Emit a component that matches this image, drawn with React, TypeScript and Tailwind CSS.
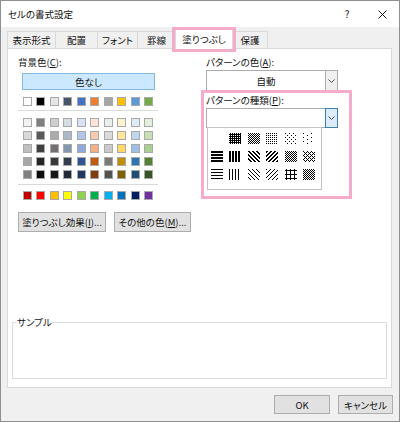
import * as React from "react";

const THEME_TOP = ["#FFFFFF", "#000000", "#E7E6E6", "#44546A", "#4472C4", "#ED7D31", "#A5A5A5", "#FFC000", "#5B9BD5", "#70AD47"];
const THEME_ROWS = [
  ["#F2F2F2", "#7F7F7F", "#D0CECE", "#D6DCE4", "#D9E1F2", "#FCE4D6", "#EDEDED", "#FFF2CC", "#DDEBF7", "#E2EFDA"],
  ["#D9D9D9", "#595959", "#AEAAAA", "#ACB9CA", "#B4C6E7", "#F8CBAD", "#DBDBDB", "#FFE699", "#BDD7EE", "#C6E0B4"],
  ["#BFBFBF", "#404040", "#757171", "#8497B0", "#8EA9DB", "#F4B084", "#C9C9C9", "#FFD966", "#9BC2E6", "#A9D08E"],
  ["#A6A6A6", "#262626", "#3A3838", "#333F4F", "#305496", "#C65911", "#7B7B7B", "#BF8F00", "#2F75B5", "#548235"],
  ["#808080", "#0D0D0D", "#161616", "#222B35", "#203764", "#833C0C", "#525252", "#806000", "#1F4E78", "#375623"],
];
const STANDARD = ["#C00000", "#FF0000", "#FFC000", "#FFFF00", "#92D050", "#00B050", "#00B0F0", "#0070C0", "#002060", "#7030A0"];

type Fn = ((x: number, y: number) => boolean) | null;
const m = (a: number, n: number) => ((a % n) + n) % n;

// Excel fill patterns, 3 rows x 6
const PATTERNS: Fn[] = [
  null,
  (x, y) => !(x % 2 === 0 && y % 2 === 0),
  (x, y) => (x + y) % 2 === 0,
  (x, y) => x % 2 === 0 && y % 2 === 0,
  (x, y) => (x % 4 === 0 && y % 4 === 0) || (x % 4 === 2 && y % 4 === 2),
  (x, y) => (x % 8 === 0 && y % 4 === 0) || (x % 8 === 4 && y % 4 === 2),
  (_x, y) => y % 3 < 2,
  (x) => x % 3 < 2,
  (x, y) => m(x - y, 4) < 2,
  (x, y) => m(x + y, 4) < 2,
  (x, y) => (x + y) % 2 === 0 || (x % 2 === 0 && y % 2 === 0) && m(x + y, 4) === 0,
  (x, y) => !((x % 4 === 0 && y % 4 === 2) || (x % 4 === 2 && y % 4 === 0)) && (x + y) % 2 === 0 || (x % 2 === 1 && y % 2 === 1),
  (_x, y) => y % 3 === 0,
  (x) => x % 3 === 0,
  (x, y) => m(x - y, 4) === 0,
  (x, y) => m(x + y, 4) === 0,
  (x, y) => x % 4 === 1 || y % 4 === 1,
  (x, y) => m(x + y, 4) === 0 || m(x - y, 4) === 0 || (x + y) % 2 === 0 && x % 2 === 0,
];

function Pattern({ f }: { f: Fn }) {
  const rects: React.ReactNode[] = [];
  if (f) {
    for (let y = 0; y < 11; y++)
      for (let x = 0; x < 12; x++)
        if (f(x, y)) rects.push(<rect key={`${x}-${y}`} x={x} y={y} width={1} height={1} fill="#000" />);
  }
  return (
    <svg width="12" height="11" viewBox="0 0 12 11" shapeRendering="crispEdges" className="block">
      {rects}
    </svg>
  );
}

function SwatchRow({ colors }: { colors: string[] }) {
  return (
    <div className="flex gap-[4.5px] ml-[4.5px]">
      {colors.map((c, i) => (
        <div key={i} className="w-[9px] h-[9px] border border-[#a9a9a9]" style={{ backgroundColor: c }} />
      ))}
    </div>
  );
}

function Chevron() {
  return (
    <svg width="7" height="4" viewBox="0 0 7 4" className="block">
      <path d="M0.5 0.5 L3.5 3.5 L6.5 0.5" fill="none" stroke="#505050" strokeWidth="1" />
    </svg>
  );
}

function Tab({ label, w }: { label: string; w: string }) {
  return (
    <div className={`${w} h-[17px] mb-px -ml-px first:ml-0 border border-b-0 border-[#d9d9d9] bg-[#f0f0f0] flex items-center justify-center`}>
      {label}
    </div>
  );
}

export default function App() {
  return (
    <div className="w-[400px] h-[422px] bg-[#f0f0f0] border border-[#8f8f8f] flex flex-col text-[9.5px] leading-[12px] text-[#111] font-['Noto_Sans_CJK_JP',sans-serif] [font-feature-settings:'palt'] overflow-hidden">
      {/* title bar */}
      <div className="h-[26px] shrink-0 bg-white flex items-center pl-[7px]">
        <span>セルの書式設定</span>
        <span className="ml-auto w-[12px] text-center text-[10px]">?</span>
        <div className="ml-[12px] w-[34px] flex justify-center">
          <svg width="9" height="9" viewBox="0 0 9 9" className="block">
            <path d="M0.5 0.5 L8.5 8.5 M8.5 0.5 L0.5 8.5" stroke="#000" strokeWidth="0.9" />
          </svg>
        </div>
      </div>

      {/* tabs */}
      <div className="h-[22px] shrink-0 flex items-end pl-[6px] relative z-10">
        <Tab label="表示形式" w="w-[49px]" />
        <Tab label="配置" w="w-[43px]" />
        <Tab label="フォント" w="w-[41px]" />
        <Tab label="罫線" w="w-[39px]" />
        <div className="relative w-[58px] h-[22px] -ml-px bg-white border border-b-0 border-[#d9d9d9] flex items-center justify-center">
          塗りつぶし
          <div className="absolute left-[-4px] right-[-4px] top-[-1px] bottom-[-3px] border-[3px] border-[#f5abcb] pointer-events-none" />
        </div>
        <Tab label="保護" w="w-[36px]" />
      </div>

      {/* panel */}
      <div className="-mt-px ml-[6px] w-[385px] h-[340px] shrink-0 bg-white border border-[#d9d9d9] flex flex-col">
        <div className="flex pt-[7px]">
          {/* left column */}
          <div className="w-[193px] pl-[10px] flex flex-col">
            <div className="h-[12px]">背景色(<span className="underline">C</span>):</div>
            <div className="mt-[5px] ml-[4px] w-[133px] h-[17px] bg-[#cce8ff] border border-[#84b9e6] flex items-center justify-center">
              色なし
            </div>
            <div className="mt-[7px]">
              <SwatchRow colors={THEME_TOP} />
            </div>
            <div className="mt-[4px] w-[140px] h-px bg-[#dadada]" />
            <div className="mt-[7px] flex flex-col gap-[4px]">
              {THEME_ROWS.map((r, i) => (
                <SwatchRow key={i} colors={r} />
              ))}
            </div>
            <div className="mt-[5px] w-[140px] h-px bg-[#dadada]" />
            <div className="mt-[6px]">
              <SwatchRow colors={STANDARD} />
            </div>
            <div className="mt-[12px] flex gap-[8px]">
              <button className="w-[88px] h-[20px] bg-[#e1e1e1] border border-[#adadad] flex items-center justify-center">
                塗りつぶし効果(<span className="underline">I</span>)...
              </button>
              <button className="w-[77px] h-[20px] bg-[#e1e1e1] border border-[#adadad] flex items-center justify-center">
                その他の色(<span className="underline">M</span>)...
              </button>
            </div>
          </div>

          {/* right column */}
          <div className="flex flex-col">
            <div className="h-[12px] ml-[5px]">パターンの色(<span className="underline">A</span>):</div>
            <div className="mt-[2px] ml-[5px] w-[132px] h-[21px] flex">
              <div className="flex-1 border border-r-0 border-[#acacac] bg-white flex items-center justify-center">自動</div>
              <div className="w-[13px] border border-[#acacac] bg-[#efefef] flex items-center justify-center">
                <Chevron />
              </div>
            </div>
            <div className="-mt-px w-[151px] h-[109px] border-[3px] border-[#f5abcb] flex flex-col">
              <div className="mt-px h-[12px] ml-[2px]">パターンの種類(<span className="underline">P</span>):</div>
              <div className="mt-[2px] ml-[2px] w-[132px] h-[20px] flex">
                <div className="flex-1 border border-r-0 border-[#acacac] bg-white" />
                <div className="w-[13px] border border-[#3c7fb1] bg-[#dcecfc] flex items-center justify-center">
                  <Chevron />
                </div>
              </div>
              <div className="-mt-px ml-[3px] w-[115px] h-[63px] border border-[#c3c3c3] bg-white pl-[3px] pt-[5px]">
                <div className="grid grid-cols-[repeat(6,12px)] gap-x-[6.4px] gap-y-[7px]">
                  {PATTERNS.map((f, i) => (
                    <Pattern key={i} f={f} />
                  ))}
                </div>
              </div>
            </div>
          </div>
        </div>

        <fieldset className="mt-auto mb-[8px] ml-[4px] w-[375px] h-[63px] border border-[#dcdcdc]">
          <legend className="ml-[4px] leading-[12px]">サンプル</legend>
        </fieldset>
      </div>

      {/* bottom buttons */}
      <div className="mt-[7px] flex justify-end gap-[8px] pr-[6px]">
        <button className="w-[56px] h-[19px] bg-[#e1e1e1] border border-[#adadad] flex items-center justify-center">OK</button>
        <button className="w-[55px] h-[19px] bg-[#e1e1e1] border border-[#adadad] flex items-center justify-center">キャンセル</button>
      </div>
    </div>
  );
}
